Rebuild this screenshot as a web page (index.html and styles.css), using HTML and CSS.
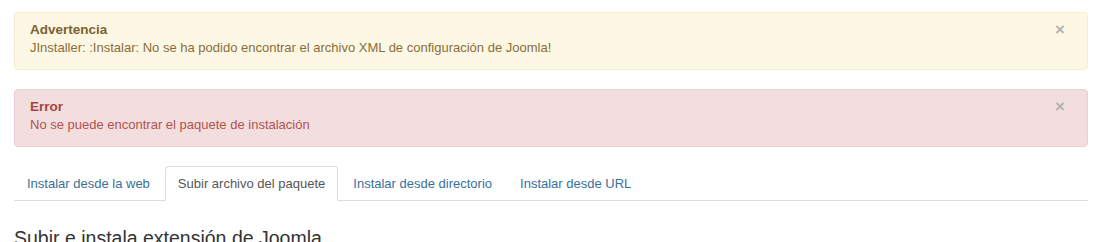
FILE: index.html
```html
<!DOCTYPE html>
<html lang="es">
<head>
  <meta charset="UTF-8">
  <title>Instalar extensiones</title>
  <link rel="stylesheet" href="styles.css">
</head>
<body>

  <div class="content">
    <div class="alert alert-warning">
      <a class="close">&times;</a>
      <h4 class="alert-heading">Advertencia</h4>
      <p>JInstaller: :Instalar: No se ha podido encontrar el archivo XML de configuración de Joomla!</p>
    </div>

    <div class="alert alert-error">
      <a class="close">&times;</a>
      <h4 class="alert-heading">Error</h4>
      <p>No se puede encontrar el paquete de instalación</p>
    </div>

    <ul class="nav-tabs">
      <li><a href="#web">Instalar desde la web</a></li>
      <li class="active"><a href="#package">Subir archivo del paquete</a></li>
      <li><a href="#folder">Instalar desde directorio</a></li>
      <li><a href="#url">Instalar desde URL</a></li>
    </ul>

    <h3 class="legend">Subir e instala extensión de Joomla</h3>
  </div>

</body>
</html>
```

FILE: styles.css
```css
body {
  font-family: 'Liberation Sans', Arial, sans-serif;
  font-size: 13px;
  line-height: 18px;
  color: #333;
  background: #fff;
  margin: 0;
  padding: 0;
}

.content {
  padding: 12px 12px 0 14px;
}

.alert {
  position: relative;
  padding: 8px 35px 12px 15px;
  margin-bottom: 19px;
  border: 1px solid;
  border-radius: 4px;
}

.alert-warning {
  background-color: #fcf8e3;
  border-color: #f6ecd0;
  color: #8a6d3b;
}

.alert-error {
  background-color: #f2dede;
  border-color: #eccdd1;
  color: #b1534f;
}

.alert-heading {
  margin: 0;
  font-size: 13.5px;
  line-height: 18px;
  font-weight: bold;
}

.alert-warning .alert-heading {
  color: #7d6130;
}

.alert-error .alert-heading {
  color: #a94442;
}

.alert p {
  margin: 0;
}

.close {
  position: absolute;
  top: 8px;
  right: 22px;
  font-size: 17px;
  font-weight: bold;
  line-height: 18px;
  color: #b3b3b3;
  cursor: pointer;
}

.nav-tabs {
  list-style: none;
  margin: 0;
  padding: 0;
  display: flex;
  border-bottom: 1px solid #ddd;
}

.nav-tabs li {
  margin-bottom: -1px;
  margin-right: 2px;
}

.nav-tabs a {
  display: block;
  padding: 8px 12px 7px;
  border: 1px solid transparent;
  border-radius: 4px 4px 0 0;
  color: #3a6f9c;
  text-decoration: none;
}

.nav-tabs .active a {
  color: #555;
  background: #fff;
  border-color: #ddd #ddd transparent;
}

.legend {
  margin: 25px 0 0;
  font-size: 19.5px;
  font-weight: normal;
  line-height: 24px;
  color: #333;
}
```
